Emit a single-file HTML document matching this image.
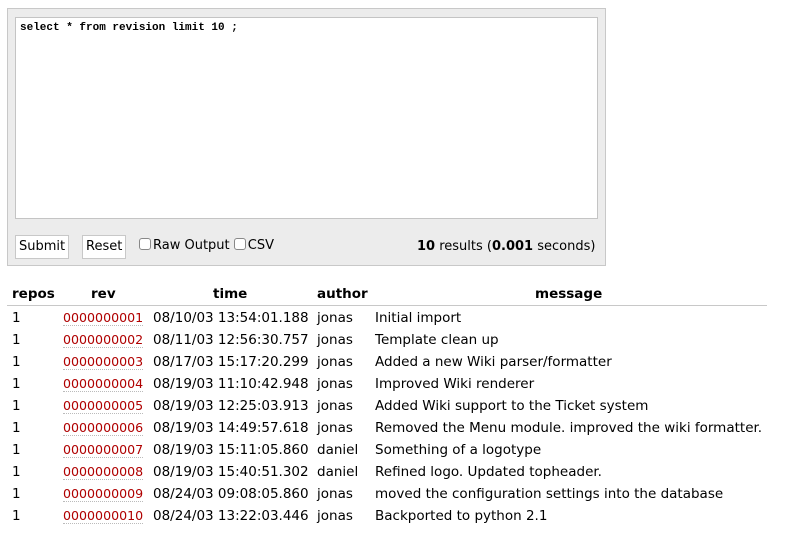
<!DOCTYPE html>
<html><head><style>
body{margin:0;background:#fff;font-family:"DejaVu Sans",Verdana,sans-serif;font-size:13.5px;color:#000;}
.box{position:absolute;left:7px;top:8px;width:597px;height:256px;background:#ececec;border:1px solid #c8c8c8;}
.ta{position:absolute;background:#fff;border:1px solid #c4c4c4;font-family:"Liberation Mono",monospace;font-size:11px;font-weight:bold;padding:4px;box-sizing:border-box;}
.btn{position:absolute;height:24px;background:#fff;border:1px solid #c8c8c8;box-sizing:border-box;font-size:13px;line-height:22px;padding:0 3px;}
.cb{display:inline-block;width:10px;height:10px;border:1px solid #888;border-radius:3px;background:#fff;vertical-align:-1px;margin-right:2px;}
.r{position:absolute;white-space:nowrap;}
.row{position:absolute;left:0;height:22px;line-height:22px;width:790px;}
.row span{position:absolute;white-space:nowrap}
a{color:#b00000;text-decoration:none;border-bottom:1px dotted #bbb;line-height:15px;display:inline-block;font-size:12.6px}
</style></head><body>
<div class="box"></div>
<div class="ta" style="left:15px;top:17px;width:583px;height:202px">select * from revision limit 10 ;</div>
<div class="btn" style="left:15px;top:235px">Submit</div>
<div class="btn" style="left:82px;top:235px">Reset</div>
<div class="r" style="left:139px;top:238px;font-size:13px"><span class="cb"></span>Raw Output <span class="cb"></span>CSV</div>
<div class="r" style="left:417px;top:239px;font-size:13px"><b>10</b> results (<b>0.001</b> seconds)</div>
<div class="r" style="left:12px;top:286px;font-weight:bold">repos</div>
<div class="r" style="left:91px;top:286px;font-weight:bold">rev</div>
<div class="r" style="left:213px;top:286px;font-weight:bold">time</div>
<div class="r" style="left:317px;top:286px;font-weight:bold">author</div>
<div class="r" style="left:535px;top:286px;font-weight:bold">message</div>
<div style="position:absolute;left:7px;top:305px;width:760px;height:1px;background:#c8c8c8"></div>
<div class="row" style="top:307px"><span style="left:12px">1</span><span style="left:63px"><a>0000000001</a></span><span style="left:153px">08/10/03 13:54:01.188</span><span style="left:317px">jonas</span><span style="left:375px">Initial import</span></div>
<div class="row" style="top:329px"><span style="left:12px">1</span><span style="left:63px"><a>0000000002</a></span><span style="left:153px">08/11/03 12:56:30.757</span><span style="left:317px">jonas</span><span style="left:375px">Template clean up</span></div>
<div class="row" style="top:351px"><span style="left:12px">1</span><span style="left:63px"><a>0000000003</a></span><span style="left:153px">08/17/03 15:17:20.299</span><span style="left:317px">jonas</span><span style="left:375px">Added a new Wiki parser/formatter</span></div>
<div class="row" style="top:373px"><span style="left:12px">1</span><span style="left:63px"><a>0000000004</a></span><span style="left:153px">08/19/03 11:10:42.948</span><span style="left:317px">jonas</span><span style="left:375px">Improved Wiki renderer</span></div>
<div class="row" style="top:395px"><span style="left:12px">1</span><span style="left:63px"><a>0000000005</a></span><span style="left:153px">08/19/03 12:25:03.913</span><span style="left:317px">jonas</span><span style="left:375px">Added Wiki support to the Ticket system</span></div>
<div class="row" style="top:417px"><span style="left:12px">1</span><span style="left:63px"><a>0000000006</a></span><span style="left:153px">08/19/03 14:49:57.618</span><span style="left:317px">jonas</span><span style="left:375px">Removed the Menu module. improved the wiki formatter.</span></div>
<div class="row" style="top:439px"><span style="left:12px">1</span><span style="left:63px"><a>0000000007</a></span><span style="left:153px">08/19/03 15:11:05.860</span><span style="left:317px">daniel</span><span style="left:375px">Something of a logotype</span></div>
<div class="row" style="top:461px"><span style="left:12px">1</span><span style="left:63px"><a>0000000008</a></span><span style="left:153px">08/19/03 15:40:51.302</span><span style="left:317px">daniel</span><span style="left:375px">Refined logo. Updated topheader.</span></div>
<div class="row" style="top:483px"><span style="left:12px">1</span><span style="left:63px"><a>0000000009</a></span><span style="left:153px">08/24/03 09:08:05.860</span><span style="left:317px">jonas</span><span style="left:375px">moved the configuration settings into the database</span></div>
<div class="row" style="top:505px"><span style="left:12px">1</span><span style="left:63px"><a>0000000010</a></span><span style="left:153px">08/24/03 13:22:03.446</span><span style="left:317px">jonas</span><span style="left:375px">Backported to python 2.1</span></div>
</body></html>
